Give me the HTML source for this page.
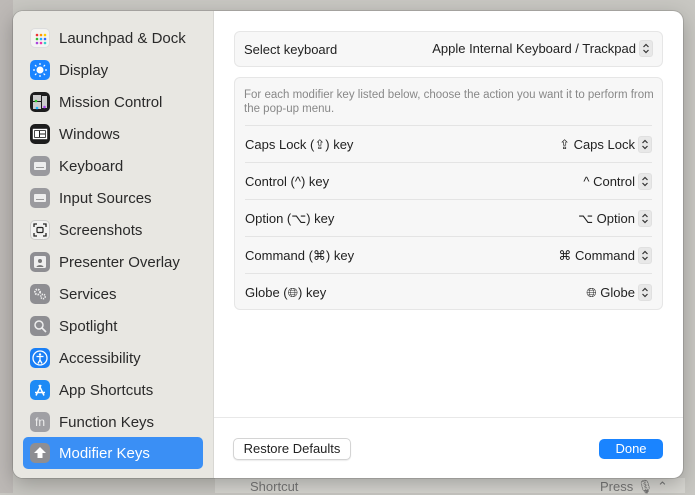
<!DOCTYPE html>
<html><head><style>
*{box-sizing:border-box;margin:0;padding:0}
body{width:695px;height:493px;overflow:hidden;background:#c8c7c2;font-family:"Liberation Sans",sans-serif;position:relative}
.bgl{position:absolute;left:0;top:0;width:13px;height:493px;background:#bdb9b6}
.bottom{position:absolute;left:215px;top:478px;width:470px;height:15px;background:#d7d6d1;color:#777;font-size:13px}
.sheet{position:absolute;left:13px;top:11px;width:670px;height:467px;border-radius:10px;overflow:hidden;background:#fff;box-shadow:0 0 0 1px rgba(0,0,0,.12),0 6px 20px rgba(0,0,0,.25)}
.side{position:absolute;left:0;top:0;width:201px;height:467px;background:#e8e7e2;border-right:1px solid #d8d7d3}
.item{position:absolute;left:10px;width:180px;height:32px;font-size:15px;color:#2a2a2a;line-height:34px;padding-left:36px}
.item .ic{position:absolute;left:7px;top:6px;width:20px;height:20px;border-radius:5px;overflow:hidden}
.item .ic svg{position:absolute;left:0;top:0}
.sel{background:#3a8ff5;color:#fff;border-radius:5px}
.box{position:absolute;left:221px;width:429px;background:#f7f7f7;border:1px solid #e6e6e6;border-radius:6px}
.row{position:absolute;left:10px;right:10px;height:37px;border-top:1px solid #e4e4e4;font-size:13px;color:#222;line-height:37px}
.row .r{position:absolute;right:0;top:0}
.st{display:inline-block;width:14px;height:17px;background:#e8e8e8;border-radius:3px;vertical-align:middle;margin-left:3px;position:relative;top:-1px;border:1px solid #e0e0e0}
.st svg{position:absolute;left:2px;top:2px}
.btn{position:absolute;font-size:13px;text-align:center;border-radius:5px}
</style></head><body>
<div class="bgl"></div>
<div class="bottom"><span style="position:absolute;left:35px;top:1px">Shortcut</span><span style="position:absolute;left:385px;top:1px">Press 🎙 ⌃</span></div>
<div class="sheet">
<div class="side">
<div class="item" style="top:11px"><div class="ic" style="background:#f4f4f2;border:1px solid #ddd"><svg width="20" height="20"><g><circle cx="6" cy="6" r="1.3" fill="#e33"/><circle cx="10" cy="6" r="1.3" fill="#f90"/><circle cx="14" cy="6" r="1.3" fill="#fc0"/><circle cx="6" cy="10" r="1.3" fill="#3b3"/><circle cx="10" cy="10" r="1.3" fill="#2af"/><circle cx="14" cy="10" r="1.3" fill="#36f"/><circle cx="6" cy="14" r="1.3" fill="#a4d"/><circle cx="10" cy="14" r="1.3" fill="#e3a"/><circle cx="14" cy="14" r="1.3" fill="#3cc"/></g></svg></div>Launchpad &amp; Dock</div>
<div class="item" style="top:43px"><div class="ic" style="background:#1a84ff"><svg width="20" height="20"><circle cx="10" cy="10" r="3.5" fill="#fff"/><g stroke="#fff" stroke-width="1.2"><path d="M10 3v2M10 15v2M3 10h2M15 10h2M5 5l1.4 1.4M13.6 13.6L15 15M5 15l1.4-1.4M13.6 6.4L15 5"/></g></svg></div>Display</div>
<div class="item" style="top:75px"><div class="ic" style="background:#1d1d1d"><svg width="20" height="20"><rect x="3" y="3" width="8" height="6" fill="#ccc"/><rect x="3" y="10" width="8" height="7" fill="#ccc"/><rect x="12" y="4" width="5" height="12" fill="#ccc"/><circle cx="6" cy="9" r="1.3" fill="#3c3"/><circle cx="7" cy="16" r="1.3" fill="#2bf"/><circle cx="14.5" cy="15" r="1.3" fill="#a4e"/></svg></div>Mission Control</div>
<div class="item" style="top:107px"><div class="ic" style="background:#1d1d1d"><svg width="20" height="20"><rect x="3.5" y="5.5" width="13" height="9" fill="none" stroke="#fff" stroke-width="1.4"/><rect x="5" y="7" width="4" height="6" fill="#fff"/><rect x="10" y="7" width="5" height="2.5" fill="#fff"/><rect x="10" y="10.5" width="5" height="2.5" fill="#fff"/></svg></div>Windows</div>
<div class="item" style="top:139px"><div class="ic" style="background:#9a9a9e"><svg width="20" height="20"><rect x="4" y="6" width="12" height="8" rx="1" fill="#eee"/><rect x="6" y="11" width="8" height="1" fill="#999"/></svg></div>Keyboard</div>
<div class="item" style="top:171px"><div class="ic" style="background:#9a9a9e"><svg width="20" height="20"><rect x="4" y="6" width="12" height="8" rx="1" fill="#eee"/><rect x="6" y="11" width="8" height="1" fill="#999"/></svg></div>Input Sources</div>
<div class="item" style="top:203px"><div class="ic" style="background:#f2f2f2;border:1px solid #ccc"><svg width="18" height="18"><path d="M3 6V3h3M12 3h3v3M15 12v3h-3M6 15H3v-3" fill="none" stroke="#222" stroke-width="1.3"/><rect x="6" y="6.5" width="6" height="5" rx="1" fill="none" stroke="#222" stroke-width="1.2"/></svg></div>Screenshots</div>
<div class="item" style="top:235px"><div class="ic" style="background:#8e8e92"><svg width="20" height="20"><rect x="4" y="4" width="12" height="12" rx="1.5" fill="#eee"/><circle cx="10" cy="9" r="2" fill="#777"/><path d="M6.5 15c.5-2.5 6.5-2.5 7 0z" fill="#777"/></svg></div>Presenter Overlay</div>
<div class="item" style="top:267px"><div class="ic" style="background:#8e8e92"><svg width="20" height="20"><circle cx="7.5" cy="8" r="2.6" fill="none" stroke="#eee" stroke-width="1.8" stroke-dasharray="1.5 1"/><circle cx="13" cy="12.5" r="2.2" fill="none" stroke="#eee" stroke-width="1.6" stroke-dasharray="1.3 .9"/></svg></div>Services</div>
<div class="item" style="top:299px"><div class="ic" style="background:#8e8e92"><svg width="20" height="20"><circle cx="9" cy="9" r="4" fill="none" stroke="#eee" stroke-width="1.5"/><path d="M12 12l4 4" stroke="#eee" stroke-width="1.6"/></svg></div>Spotlight</div>
<div class="item" style="top:331px"><div class="ic" style="background:#1a7ff5"><svg width="20" height="20"><circle cx="10" cy="10" r="7" fill="none" stroke="#fff" stroke-width="1.3"/><circle cx="10" cy="6.5" r="1.2" fill="#fff"/><path d="M6.5 8.5h7M10 8.5v3.5l-2 3.5M10 12l2 3.5" fill="none" stroke="#fff" stroke-width="1.3"/></svg></div>Accessibility</div>
<div class="item" style="top:363px"><div class="ic" style="background:#1e8af5"><svg width="20" height="20"><path d="M6 15.5L11 5M14 15.5L9 5M5 12.5h10" fill="none" stroke="#fff" stroke-width="1.5"/></svg></div>App Shortcuts</div>
<div class="item" style="top:395px"><div class="ic" style="background:#a0a0a4;color:#eee;font-size:12px;line-height:20px;text-align:center">fn</div>Function Keys</div>
<div class="item sel" style="top:426px"><div class="ic" style="background:#8e8e92"><svg width="20" height="20"><path d="M10 4l6 6h-3.5v5h-5v-5H4z" fill="#fff"/></svg></div>Modifier Keys</div>
</div>
<div class="box" style="top:20px;height:36px"><div style="position:absolute;left:9px;top:10px;font-size:13px;color:#222">Select keyboard</div><div style="position:absolute;right:9px;top:9px;font-size:13px;color:#222">Apple Internal Keyboard / Trackpad<span class="st"><svg width="8" height="11"><path d="M1.5 4L4 1.5 6.5 4M1.5 7L4 9.5 6.5 7" fill="none" stroke="#333" stroke-width="1.2"/></svg></span></div></div>
<div class="box" style="top:66px;height:233px">
<div style="position:absolute;left:9px;top:10px;font-size:11.5px;color:#888;line-height:14px;width:415px">For each modifier key listed below, choose the action you want it to perform from the pop-up menu.</div>
<div class="row" style="top:47px">Caps Lock (⇪) key<span class="r">⇪ Caps Lock<span class="st"><svg width="8" height="11"><path d="M1.5 4L4 1.5 6.5 4M1.5 7L4 9.5 6.5 7" fill="none" stroke="#333" stroke-width="1.2"/></svg></span></span></div>
<div class="row" style="top:84px">Control (^) key<span class="r">^ Control<span class="st"><svg width="8" height="11"><path d="M1.5 4L4 1.5 6.5 4M1.5 7L4 9.5 6.5 7" fill="none" stroke="#333" stroke-width="1.2"/></svg></span></span></div>
<div class="row" style="top:121px">Option (⌥) key<span class="r">⌥ Option<span class="st"><svg width="8" height="11"><path d="M1.5 4L4 1.5 6.5 4M1.5 7L4 9.5 6.5 7" fill="none" stroke="#333" stroke-width="1.2"/></svg></span></span></div>
<div class="row" style="top:158px">Command (⌘) key<span class="r">⌘ Command<span class="st"><svg width="8" height="11"><path d="M1.5 4L4 1.5 6.5 4M1.5 7L4 9.5 6.5 7" fill="none" stroke="#333" stroke-width="1.2"/></svg></span></span></div>
<div class="row" style="top:195px">Globe (🌐︎) key<span class="r">🌐︎ Globe<span class="st"><svg width="8" height="11"><path d="M1.5 4L4 1.5 6.5 4M1.5 7L4 9.5 6.5 7" fill="none" stroke="#333" stroke-width="1.2"/></svg></span></span></div>
</div>
<div style="position:absolute;left:201px;top:406px;width:469px;height:1px;background:#e8e8e8"></div>
<div class="btn" style="left:220px;top:427px;width:118px;height:22px;line-height:20px;border:1px solid #d4d4d4;background:#fff;color:#222;box-shadow:0 1px 1px rgba(0,0,0,.08)">Restore Defaults</div>
<div class="btn" style="left:586px;top:428px;width:64px;height:20px;line-height:20px;background:#1a84ff;color:#fff">Done</div>
</div>
</body></html>
